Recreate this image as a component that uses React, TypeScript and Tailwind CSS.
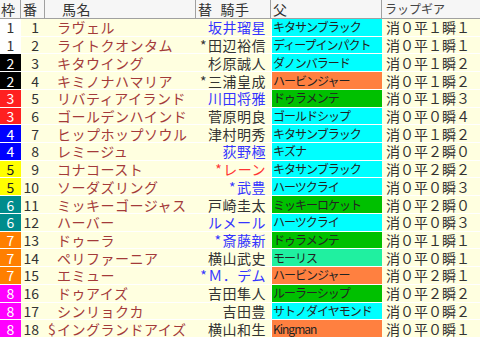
const font = { fontFamily: '"Noto Sans CJK JP", "Noto Sans", sans-serif' };

type Row = {
  waku: number;
  no: number;
  mark?: string;
  name: string;
  star?: boolean;
  jockey: string;
  jc: "blue" | "black" | "red";
  sire: string;
  sc: "cyan" | "orange" | "green" | "mint";
  gear: string;
};

const rows: Row[] = [
  { waku: 1, no: 1, name: "ラヴェル", jockey: "坂井瑠星", jc: "blue", sire: "キタサンブラック", sc: "cyan", gear: "消０平１瞬１" },
  { waku: 1, no: 2, name: "ライトクオンタム", star: true, jockey: "田辺裕信", jc: "black", sire: "ディープインパクト", sc: "cyan", gear: "消０平１瞬１" },
  { waku: 2, no: 3, name: "キタウイング", jockey: "杉原誠人", jc: "black", sire: "ダノンバラード", sc: "cyan", gear: "消０平１瞬２" },
  { waku: 2, no: 4, name: "キミノナハマリア", star: true, jockey: "三浦皇成", jc: "black", sire: "ハービンジャー", sc: "orange", gear: "消０平１瞬２" },
  { waku: 3, no: 5, name: "リバティアイランド", jockey: "川田将雅", jc: "blue", sire: "ドゥラメンテ", sc: "green", gear: "消０平１瞬３" },
  { waku: 3, no: 6, name: "ゴールデンハインド", jockey: "菅原明良", jc: "black", sire: "ゴールドシップ", sc: "cyan", gear: "消０平０瞬４" },
  { waku: 4, no: 7, name: "ヒップホップソウル", jockey: "津村明秀", jc: "black", sire: "キタサンブラック", sc: "cyan", gear: "消０平１瞬２" },
  { waku: 4, no: 8, name: "レミージュ", jockey: "荻野極", jc: "blue", sire: "キズナ", sc: "cyan", gear: "消０平２瞬０" },
  { waku: 5, no: 9, name: "コナコースト", star: true, jockey: "レーン", jc: "red", sire: "キタサンブラック", sc: "cyan", gear: "消０平２瞬２" },
  { waku: 5, no: 10, name: "ソーダズリング", star: true, jockey: "武豊", jc: "blue", sire: "ハーツクライ", sc: "cyan", gear: "消０平０瞬３" },
  { waku: 6, no: 11, name: "ミッキーゴージャス", jockey: "戸崎圭太", jc: "black", sire: "ミッキーロケット", sc: "green", gear: "消０平２瞬０" },
  { waku: 6, no: 12, name: "ハーバー", jockey: "ルメール", jc: "blue", sire: "ハーツクライ", sc: "cyan", gear: "消０平０瞬３" },
  { waku: 7, no: 13, name: "ドゥーラ", star: true, jockey: "斎藤新", jc: "blue", sire: "ドゥラメンテ", sc: "green", gear: "消０平１瞬１" },
  { waku: 7, no: 14, name: "ペリファーニア", jockey: "横山武史", jc: "black", sire: "モーリス", sc: "mint", gear: "消０平０瞬１" },
  { waku: 7, no: 15, name: "エミュー", star: true, jockey: "Ｍ．デム", jc: "blue", sire: "ハービンジャー", sc: "orange", gear: "消０平２瞬１" },
  { waku: 8, no: 16, name: "ドゥアイズ", jockey: "吉田隼人", jc: "black", sire: "ルーラーシップ", sc: "green", gear: "消０平２瞬２" },
  { waku: 8, no: 17, name: "シンリョクカ", jockey: "吉田豊", jc: "black", sire: "サトノダイヤモンド", sc: "cyan", gear: "消０平０瞬２" },
  { waku: 8, no: 18, mark: "$", name: "イングランドアイズ", jockey: "横山和生", jc: "black", sire: "Kingman", sc: "orange", gear: "消０平０瞬１" },
];

const wakuCls: Record<number, string> = {
  1: "bg-white text-[#333]",
  2: "bg-black text-white",
  3: "bg-[#ff2020] text-white",
  4: "bg-[#0000ff] text-white",
  5: "bg-[#ffff00] text-[#222]",
  6: "bg-[#008c8c] text-white",
  7: "bg-[#ff7f00] text-white",
  8: "bg-[#ff00ff] text-white",
};

const sireCls = {
  cyan: "bg-[#00ffff]",
  orange: "bg-[#ff8040]",
  green: "bg-[#00c000]",
  mint: "bg-[#20f0a0]",
};

const jockeyCls = {
  blue: "text-[#3535ff]",
  black: "text-[#333]",
  red: "text-[#ff3535]",
};

export default function App() {
  return (
    <div
      className="grid h-[338px] w-[480px] grid-cols-[21px_24px_151px_75px_111px_98px] grid-rows-[19px_repeat(18,1fr)] overflow-hidden bg-[#ffffe0] text-[14px] leading-none text-[#333]"
      style={font}
    >
      {/* header */}
      <div className="flex items-center border-r border-b border-[#a0a0a0] bg-[#f6f6f6] pl-px">枠</div>
      <div className="flex items-center border-r border-b border-[#a0a0a0] bg-[#f6f6f6] pl-[2px]">番</div>
      <div className="flex items-center border-r border-b border-[#a0a0a0] bg-[#f6f6f6] pl-[17px] tracking-[0.5px]">馬名</div>
      <div className="flex items-center gap-[8px] border-r border-b border-[#a0a0a0] bg-[#f6f6f6] pl-[2px] tracking-[0.5px]">
        <span>替</span>
        <span>騎手</span>
      </div>
      <div className="flex items-center border-r border-b border-[#a0a0a0] bg-[#f6f6f6] pl-[2px]">父</div>
      <div className="flex items-center border-b border-[#a0a0a0] bg-[#f6f6f6] pl-[3px] text-[12px] text-[#444]">ラップギア</div>

      {rows.map((r) => (
        <div key={r.no} className="contents">
          <div className={`flex items-center justify-center border-b border-white ${wakuCls[r.waku]}`}>
            {r.waku}
          </div>
          <div className="flex items-center justify-end border-b border-white pr-[6px]">{r.no}</div>
          <div className="flex items-center whitespace-nowrap border-b border-white pl-[3px] text-[#a33a3a]">
            <span className="w-[9px]">{r.mark ?? ""}</span>
            <span className="tracking-[0.5px]">{r.name}</span>
          </div>
          <div className={`flex items-center justify-end whitespace-nowrap border-b border-white pr-[5px] tracking-[0.5px] ${jockeyCls[r.jc]}`}>
            {r.star && <span className="mr-px">*</span>}
            {r.jockey}
          </div>
          <div className={`flex items-center overflow-hidden whitespace-nowrap border-l border-b border-white pl-px text-[12px] tracking-[-1px] text-[#222] ${sireCls[r.sc]}`}>
            {r.sire}
          </div>
          <div className="flex items-center whitespace-nowrap border-b border-white pl-[4px]">{r.gear}</div>
        </div>
      ))}
    </div>
  );
}
